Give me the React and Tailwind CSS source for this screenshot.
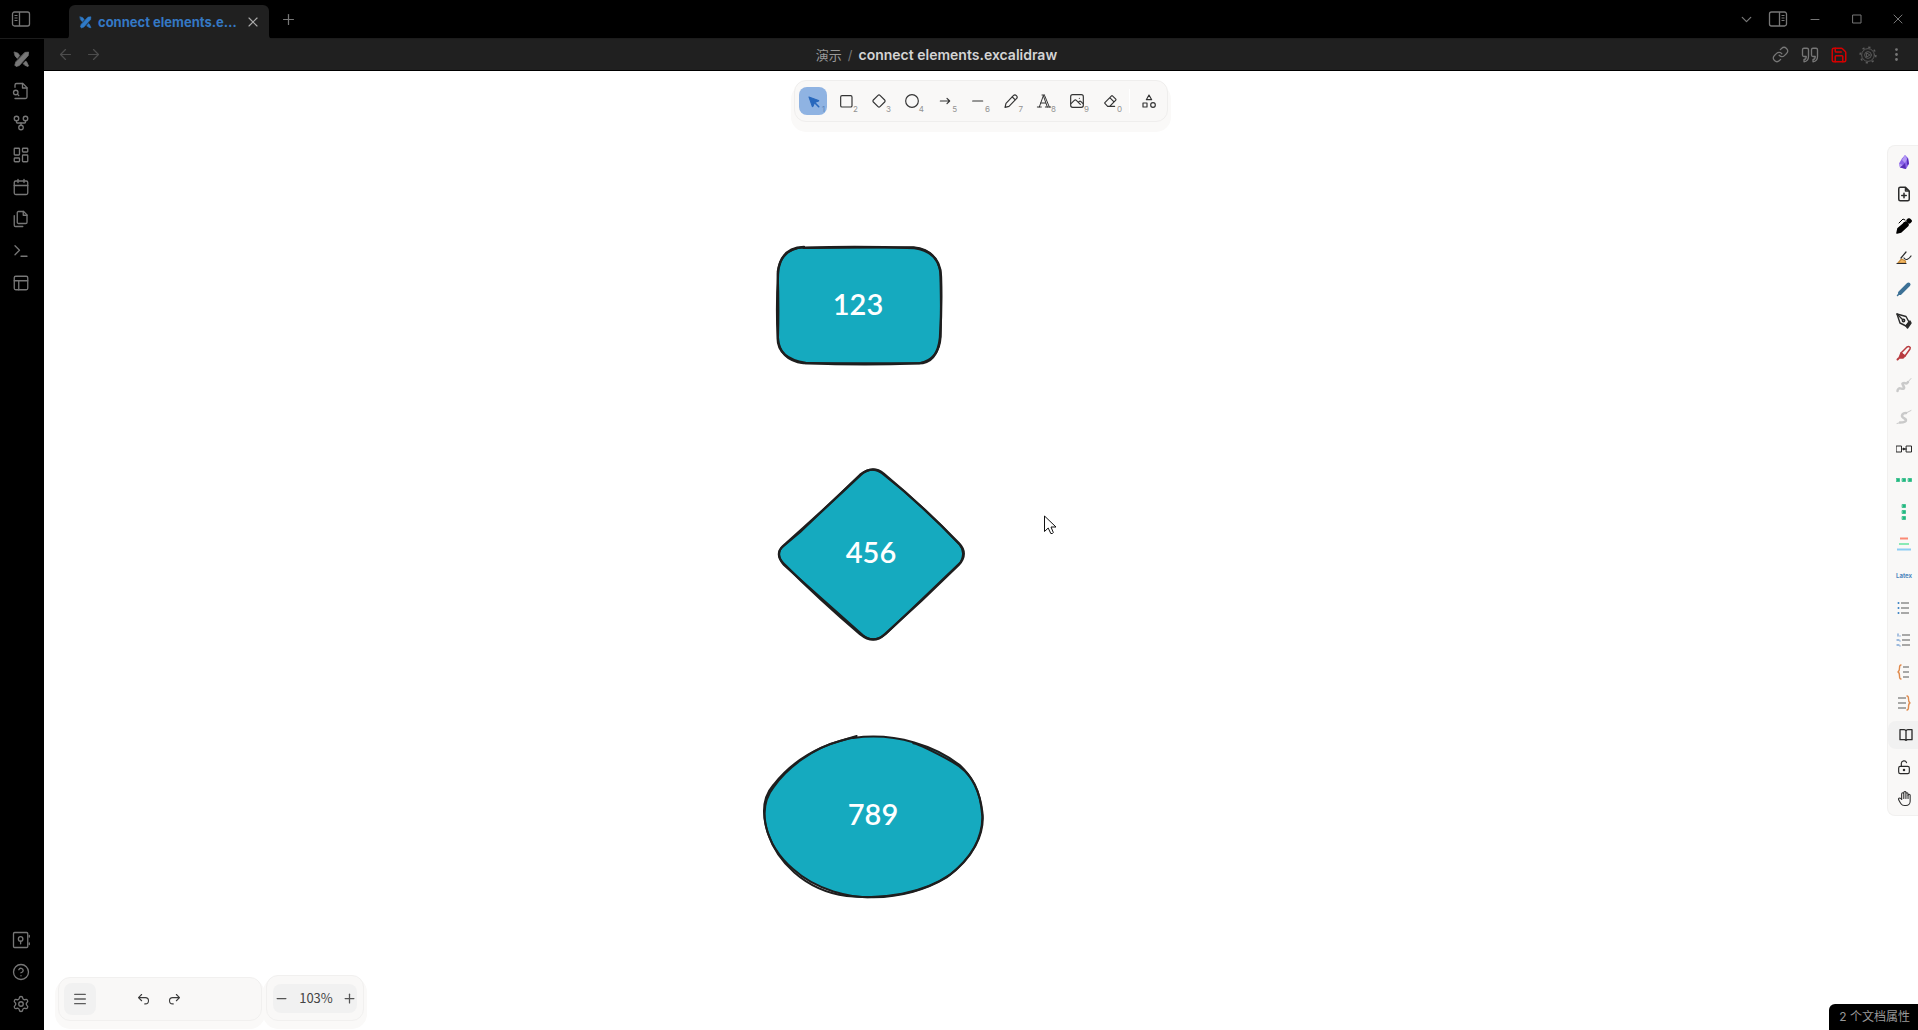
import React from "react";
import {
  ArrowLeft, ArrowRight, Calendar, ChevronDown, CircleHelp, EllipsisVertical, Files, GitFork,
  LayoutDashboard, Link, Menu, Minus, PanelsTopLeft, Plus, Save, Settings, Terminal, X,
} from "lucide-react";

function Svg({ size = 18, box = "0 0 24 24", width = 1.75, children, className = "" }) {
  return (
    <svg width={size} height={size} viewBox={box} fill="none" stroke="currentColor" strokeWidth={width}
      strokeLinecap="round" strokeLinejoin="round" className={className} aria-hidden="true">
      {children}
    </svg>
  );
}

const ExcalidrawLogo = ({ size }) => (
  <Svg size={size} width={1}>
    <g fill="currentColor">
      <path d="M17 2l5-.5-.5 5L9 20.500l-4.500 1.500-2-2L4 15.500z" />
      <path d="M2 1.500l5 1.500 2.500 3.500-3.500 4L3 7z" />
      <path d="M14.500 17.500l3.500-3.500 1.500 2 2.500 5-1 1-3.500-1.500z" />
    </g>
  </Svg>
);

const SidebarToggle = ({ flip }) => (
  <svg width="20" height="18" viewBox="0 0 20 18" fill="none" stroke="currentColor" aria-hidden="true" className={flip ? "-scale-x-100" : ""}>
    <rect x="1.500" y="2" width="17" height="14" rx="2" strokeWidth="1.300" />
    <path d="M8.500 2v14" strokeWidth="1.300" />
    <path d="M3.500 5.500h3M3.500 8h3M3.500 10.500h3" />
  </svg>
);

const FileSearch = () => (
  <Svg>
    <path d="M4 22h14a2 2 0 0 0 2-2V7.500L14.500 2H6a2 2 0 0 0-2 2v3" />
    <path d="M14 2v6h6" />
    <circle cx="5" cy="14" r="3" />
    <path d="m9 18-1.500-1.500" />
  </Svg>
);
const Vault = () => (
  <Svg>
    <rect x="2" y="2" width="19" height="20" rx="1.500" />
    <circle cx="11.500" cy="10.500" r="3" />
    <path d="M11.500 13.500V17M23 6v2M23 16v2" />
  </Svg>
);
const Quotes = () => (
  <Svg size={18}>
    <path d="M16 3h4a2 2 0 0 1 2 2v9c0 4-2 6.500-6 7v-3c2 0 3-1.500 3-4h-3a2 2 0 0 1-2-2V5a2 2 0 0 1 2-2z" />
    <path d="M4 3h4a2 2 0 0 1 2 2v9c0 4-2 6.500-6 7v-3c2 0 3-1.500 3-4H4a2 2 0 0 1-2-2V5a2 2 0 0 1 2-2z" />
  </Svg>
);
const GearPlay = () => (
  <Svg size={18} width={1.25} className="text-[#5c5c5c]">
    <circle cx="12" cy="12" r="8.500" />
    <circle cx="12" cy="12" r="10.500" strokeDasharray="3 5.250" strokeWidth="2" strokeLinecap="butt" />
    <circle cx="12" cy="12" r="4.500" />
    <path d="M10.500 9.500l4 2.500-4 2.500z" />
  </Svg>
);

const ribbonTop = [
  ["Excalidraw", <ExcalidrawLogo size={17} />],
  ["Quick switcher", <FileSearch />],
  ["Graph view", <GitFork size={18} strokeWidth={1.75} />],
  ["Canvas", <LayoutDashboard size={18} strokeWidth={1.75} />],
  ["Daily note", <Calendar size={18} strokeWidth={1.75} />],
  ["Templates", <Svg><path d="M15.500 2H8.600a1.600 1.600 0 0 0-1.600 1.600v12.800A1.600 1.600 0 0 0 8.600 18h9.800a1.600 1.600 0 0 0 1.600-1.600V6.500z" /><path d="M3 7.600v12.800A1.600 1.600 0 0 0 4.600 22h9.800M15 2v5h5" /></Svg>],
  ["Command palette", <Terminal size={18} strokeWidth={1.75} />],
  ["Workspaces", <PanelsTopLeft size={18} strokeWidth={1.75} />],
];
const ribbonBottom = [
  ["Vault", <Vault />],
  ["Help", <CircleHelp size={18} strokeWidth={1.75} />],
  ["Settings", <Settings size={18} strokeWidth={1.75} />],
];

function Ribbon({ items }) {
  return (
    <div className="flex flex-col">
      {items.map(([label, icon]) => (
        <button key={label} aria-label={label} className="grid h-8 w-full place-items-center">{icon}</button>
      ))}
    </div>
  );
}

const tools = [
  ["Selection", <Svg size={18} box="0 0 22 22" width={1.25}><path fill="currentColor" d="M6 6l4.153 11.793a.365.365 0 0 0 .331.207.366.366 0 0 0 .332-.207L13 13l4.787-1.994a.355.355 0 0 0 .213-.323.355.355 0 0 0-.213-.323L6 6Z" /><path d="M13.500 13.500L18 18" strokeWidth="2" /></Svg>],
  ["Rectangle", <Svg size={16}><rect x="4" y="4" width="17" height="17" rx="2" /></Svg>],
  ["Diamond", <Svg size={16}><path d="M10.500 3.500l-7 7a2.100 2.100 0 0 0 0 3l7 7a2.100 2.100 0 0 0 3 0l7-7a2.100 2.100 0 0 0 0-3l-7-7a2.100 2.100 0 0 0-3 0z" /></Svg>],
  ["Ellipse", <Svg size={16}><circle cx="12" cy="12" r="9.500" /></Svg>],
  ["Arrow", <Svg size={16}><path d="M5 12h14M15 16l4-4M15 8l4 4" /></Svg>],
  ["Line", <Svg size={16}><path d="M4 12h15" /></Svg>],
  ["Draw", <Svg size={16}><path d="M4.500 15.500L15.500 4a3.200 3.200 0 0 1 4.700 4.500L9 20l-6 1.500z" /><path d="M14 6l4 4" /></Svg>],
  ["Text", <Svg size={16} width={1.5}><path d="M2 21h6M14 21h8M5 21l6-17h2l7 17M11 4l6 17M7 15h7.500M9 3h4" /></Svg>],
  ["Image", <Svg size={16}><rect x="2.500" y="2.500" width="19" height="19" rx="3" /><path d="M15.500 8h.01M3 16l5-5c1-.9 2-.9 3 0l6 6M14 14l1-1c1-.9 2-.9 3 0l3 3" /></Svg>],
  ["Eraser", <Svg size={16}><path d="M19 20H8.500l-4.200-4.300a1 1 0 0 1 0-1.400l10-10a1 1 0 0 1 1.400 0l5 5a1 1 0 0 1 0 1.400L11.500 20M18 13.300L11.700 7" /></Svg>],
];

function Toolbar() {
  return (
    <div className="flex justify-center pt-[9px]">
      <div className="rounded-xl border border-[#efeeed] bg-[#f9f8f7] px-1 py-1.5 shadow-[0_7px_0_3px_#faf9f8]">
        <div role="toolbar" aria-label="Shapes" className="flex items-center gap-[5px] text-[#343434]">
          {tools.map(([label, icon], i) => (
            <button key={label} aria-label={label} className={"relative grid size-7 place-items-center rounded-lg " + (i === 0 ? "bg-[#8fb3e2] text-[#2868bd]" : "")}>
              {icon}
              <span className={"absolute bottom-0.5 right-0.5 text-[8px] leading-2 " + (i === 0 ? "text-[#5c86bd]" : "text-[#929292]")}>{(i + 1) % 10}</span>
            </button>
          ))}
          <span className="h-6 w-px bg-white" />
          <button aria-label="More tools" className="grid size-7 place-items-center">
            <Svg size={16}><path d="M12 3l-4 7h8zM3 15h6v6H3z" /><circle cx="18" cy="18" r="3.500" /></Svg>
          </button>
        </div>
      </div>
    </div>
  );
}

const lines = (x, w) => <path d={`M${x} 3h${w}M${x} 8h${w}M${x} 13h${w}`} stroke="#8d8d8d" strokeWidth="1.500" strokeLinecap="butt" />;

const pinned = [
  ["Obsidian tools", <Svg size={16} box="0 0 16 16" width={0}><path fill="#8a63e8" d="M9 1l3 3 1 6-3 5-6-1.500-1-4 3-5z" /><path fill="#b59af5" d="M9 1L6 6l3 3 2-4zM3 9.500L7 11l-3 2.500z" /><path fill="#5a2fb8" d="M9 9l1 6-6-1.500 3-2.500zM11 5l1-1 1 6-2 1z" /></Svg>],
  ["Add file", <Svg size={18} width={2}><path d="M14 3v5h5M5 5a2 2 0 0 1 2-2h7l5 5v11a2 2 0 0 1-2 2H7a2 2 0 0 1-2-2zM12 11v6M9 14h6" /></Svg>],
  ["Marker pen", <Svg size={16} box="0 0 16 16" width={1}><g stroke="#000" fill="#000"><path d="M1 15l1-4.500 7-6 3 3L5 14z" strokeWidth="1.500" /><circle cx="13" cy="3" r="2.300" /><path d="M10 4l2.500 2.500-2 2-3-3z" /><path d="M3 5l4-4 2 1" fill="none" /></g></Svg>],
  ["Highlighter", <Svg size={16} box="0 0 16 16" width={1.2}><path d="M2 13l3.500-4 4 2v2z" fill="#f3b762" stroke="#c88c3c" /><path d="M5 8l5-6M8 8c2 3 5 1 7-2M1 13.500h9" /></Svg>],
  ["Ballpoint", <Svg size={16} box="0 0 16 16" width={4}><path d="M4 12l8.500-8.500" stroke="#3d7196" strokeWidth="4" /><path d="M1.500 14.500l2-2" stroke="#3d7196" strokeWidth="1.500" /></Svg>],
  ["Fountain pen", <Svg size={16} box="0 0 16 16" width={1.4}><path d="M1 1l3 9 6 3 3-4-3-5.500z" /><path d="M1 1l6 6" /><circle cx="7.500" cy="7.500" r="1.200" /><path d="M10 13l4-5 1 2-3.500 5z" fill="currentColor" /></Svg>],
  ["Red marker", <Svg size={16} box="0 0 16 16" width={1.5}><g stroke="#b93b40"><path d="M5 8l6-6c2-1 4 0 3 2l-5 7z" /><path d="M5 8l4 3-2 2H3z" fill="#b93b40" /><path d="M1.500 14.500l1-1" strokeWidth="2" /></g></Svg>],
  ["Thick brush", <Svg size={16} box="0 0 16 16" width={2}><g stroke="#cacaca"><path d="M1.500 14c0-2 2-3 3-2.500s4.500.5 3.500-1.500-3-4 0-4 2 2 4-1" strokeWidth="2.500" /><path d="M11 6l4-4.500" strokeWidth="1" /></g></Svg>],
  ["Thin brush", <Svg size={16} box="0 0 16 16" width={2}><g stroke="#cacaca"><path d="M4 13.500c4 0 6-1 6-2.500S5.500 9 6 6.500 8 4 10 4" strokeWidth="2.500" /><path d="M10 4l5-2.500M1 14.500l4-1" strokeWidth="1" /></g></Svg>],
  ["Connect elements", <Svg size={16} box="0 0 16 16" width={1}><path d="M.5 5h5v6h-5zM10.500 5h5v6h-5zM5.500 8h5" strokeLinejoin="miter" /><path d="M7 6.500l3 1.500-3 1.500z" fill="currentColor" stroke="none" /></Svg>],
  ["Distribute horizontally", <Svg size={16} box="0 0 16 16" width={1}><path fill="#1fba80" stroke="#45c193" strokeLinejoin="miter" d="M.5 6.500h3v3h-3zM6.500 6.500h3v3h-3zM12.500 6.500h3v3h-3z" /></Svg>],
  ["Distribute vertically", <Svg size={16} box="0 0 16 16" width={1}><path fill="#1fba80" stroke="#45c193" strokeLinejoin="miter" d="M6.500.5h3v3h-3zM6.500 6.500h3v3h-3zM6.500 12.500h3v3h-3z" /></Svg>],
  ["Stack", <Svg size={16} box="0 0 16 16" width={2}><g strokeLinecap="butt"><path d="M4 2.500h8" stroke="#fb8a75" /><path d="M3 8h10" stroke="#63e6a0" strokeWidth="1.500" /><path d="M1 13.500h14" stroke="#8bcdf3" /></g></Svg>],
  ["Latex", <span className="text-[6px] font-bold leading-4 text-[#4e86bd]">Latex</span>],
  ["Bulleted list", <Svg size={16} box="0 0 16 16">{lines(5, 8)}<path d="M2.500 3h.01M2.500 8h.01M2.500 13h.01" stroke="#3b82c4" strokeWidth="2" /></Svg>],
  ["Numbered list", <Svg size={16} box="0 0 16 16">{lines(6, 8)}<path d="M2 2v2M4 4h.01M1 8h2M4 9h.01M1 13h2M4 14h.01" stroke="#7da4d4" strokeWidth="1.300" /></Svg>],
  ["Left brace", <Svg size={16} box="0 0 16 16">{lines(7, 6)}<path d="M5 1C2 1 5 6.500 2 8c3 1 0 7 3 7" stroke="#e08a4c" strokeWidth="1.400" /></Svg>],
  ["Right brace", <Svg size={16} box="0 0 16 16">{lines(2, 8)}<path d="M11 1c3 0 0 5.500 3 7-3 1 0 7-3 7" stroke="#e08a4c" strokeWidth="1.400" /></Svg>],
  ["Library", <Svg size={16} width={2}><path d="M3 4h6a3 3 0 0 1 3 2 3 3 0 0 1 3-2h6v15h-7l-2 1-2-1H3zM12 6v14" /></Svg>],
  ["Lock", <Svg size={16} width={1.75}><rect x="4" y="11" width="16" height="11" rx="2.500" /><circle cx="12" cy="16.500" r="1" fill="currentColor" /><path d="M8 11V6.500a4 4 0 0 1 7.800-1" /></Svg>],
  ["Hand", <Svg size={17} width={1.5}><path d="M8 13V5.500a1.500 1.500 0 0 1 3 0V12M11 5.500v-2a1.500 1.500 0 1 1 3 0V12M14 5.500a1.500 1.500 0 0 1 3 0V12" /><path d="M17 7.500a1.500 1.500 0 0 1 3 0V16a6 6 0 0 1-6 6h-2a6 6 0 0 1-5-2.700C6.700 19 5.600 17 3.700 13.600a1.500 1.500 0 0 1 .5-2 1.900 1.900 0 0 1 2.300.3L8 13" /></Svg>],
];

function PinnedScripts() {
  return (
    <div role="toolbar" aria-label="Pinned scripts" className="absolute right-0 top-[74px] flex h-[671px] w-[31px] flex-col justify-between rounded-l-lg border border-r-0 border-[#f1f0ef] bg-[#f9f8f7] py-0.5 text-[#2b2b2b]">
      {pinned.map(([label, icon]) => (
        <button key={label} aria-label={label} className={"grid h-7 w-full place-items-center rounded-l-lg " + (label === "Library" ? "bg-[#f1f1f1] pl-1.5" : "pl-0.5")}>{icon}</button>
      ))}
    </div>
  );
}

function Shape({ place, box, label, children }) {
  return (
    <div className={"absolute grid place-items-center " + place}>
      <svg viewBox={box} className="col-start-1 row-start-1 size-full" stroke="#1e1e1e" fill="none" strokeLinejoin="round" strokeLinecap="round" aria-hidden="true">{children}</svg>
      <span className="col-start-1 row-start-1 font-[Lato] text-[29px] font-semibold leading-8 text-white">{label}</span>
    </div>
  );
}

function Drawing() {
  return (
    <>
      <Shape place="left-[714px] top-[158px] h-[150px] w-[200px]" box="-6 -3 600 450" label="123">
        <path fill="#15aabf" strokeWidth="7" d="M132 53Q300 48 463 54Q542 66 543 140Q546 230 540 322Q532 402 472 400Q300 406 137 399Q52 384 53 323Q49 230 54 132Q58 54 132 51Z" />
        <path strokeWidth="6" d="M130 54Q300 53 460 52Q530 58 541 127Q544 240 542 320Q538 388 478 400Q300 400 130 400Q58 390 54 323Q57 230 53 125Q62 58 130 52Z" />
      </Shape>
      <Shape place="left-[717px] top-[381px] h-[200px] w-[220px]" box="3 6 660 600" label="456">
        <path fill="#15aabf" strokeWidth="7" d="M303 74C322 56 348 52 371 71Q490 170 597 280C616 300 616 322 596 345Q490 450 374 553C350 576 325 572 300 552Q180 450 70 340C52 322 53 303 69 288Q180 190 303 74Z" />
        <path strokeWidth="6" d="M300 74C325 55 346 54 365 69Q490 166 599 284C614 302 612 318 602 337L378 551C350 574 328 572 308 555L72 345C52 322 54 302 68 290L120 247Z" />
      </Shape>
      <Shape place="left-[704px] top-[648px] h-[190px] w-[250px]" box="-6 -3 750 570" label="789">
        <path fill="#15aabf" strokeWidth="6" d="M318 51C210 72 125 125 70 195C18 255 40 370 130 448C200 512 300 533 370 532C460 530 530 508 590 472C670 415 706 340 697 275C690 215 664 168 630 136C560 80 440 36 310 54" />
        <path strokeWidth="6" d="M320 48L270 63C190 83 110 145 72 200C40 240 36 285 54 340C80 420 160 510 290 528C400 540 520 520 600 464C665 412 697 350 697 290C692 215 670 160 608 126C560 100 505 73 490 70" />
      </Shape>
      <svg width="14" height="21" viewBox="0 0 14 21" className="absolute left-[1000px] top-[444px]" fill="#fff" stroke="#111" aria-hidden="true">
        <path d="M.5 1v15.500l3.700-3.500 2.600 5.500q2 .5 2.500-1L7 12h5z" />
      </svg>
    </>
  );
}

function Footer() {
  return (
    <div className="absolute bottom-[9px] left-3.5 flex items-end gap-1">
      <div className="flex h-11 w-[204px] items-center rounded-xl border border-[#f1f0ef] bg-[#f9f8f7] pl-[5px] text-[#3b3b3b] shadow-[0_5px_0_3px_#faf9f8]">
        <button aria-label="Menu" className="grid size-8 place-items-center rounded-lg bg-[#f1f1f1] text-[#5c5c5c]"><Menu size={16} strokeWidth={2} /></button>
        <button aria-label="Undo" className="ml-8 grid size-[30px] place-items-center"><Svg size={15}><path d="M9 14l-5-5 5-5M4 9h11a5 5 0 0 1 0 10h-1" /></Svg></button>
        <button aria-label="Redo" className="grid size-8 place-items-center"><Svg size={15}><path d="M15 14l5-5-5-5M20 9H9a5 5 0 0 0 0 10h1" /></Svg></button>
      </div>
      <div className="flex h-[46px] w-[98px] items-center justify-center rounded-xl border border-[#f1f0ef] bg-[#f9f8f7] shadow-[0_5px_0_3px_#faf9f8]">
        <div className="flex h-[29px] w-[84px] items-center justify-between rounded-lg bg-[#f1f1f1] text-[#555]">
          <button aria-label="Zoom out" className="grid w-4 place-items-center"><Minus size={15} /></button>
          <button aria-label="Reset zoom" className="pl-0.5 font-['Noto_Sans_CJK_SC',sans-serif] text-[13px] leading-5 text-[#444]">103%</button>
          <button aria-label="Zoom in" className="grid w-4 place-items-center"><Plus size={15} /></button>
        </div>
      </div>
    </div>
  );
}

function TitleBar() {
  return (
    <header className="flex h-[39px] shrink-0 items-stretch border-b border-[#1c1c1c] text-[#777]">
      <button aria-label="Toggle left sidebar" className="grid w-[42px] place-items-center"><SidebarToggle /></button>
      <div className="relative -mb-px ml-[27px] mt-[5px] flex w-[200px] items-center rounded-t-md bg-[#202020] pl-2.5 pr-2">
        <svg width="4" height="4" className="absolute -left-1 bottom-0" aria-hidden="true"><path d="M4 0v4H0q4 0 4-4z" fill="#202020" /></svg>
        <svg width="4" height="4" className="absolute -right-1 bottom-0" aria-hidden="true"><path d="M0 0v4h4q-4 0-4-4z" fill="#202020" /></svg>
        <span className="w-[19px] text-[#2f7bc9]"><ExcalidrawLogo size={13} /></span>
        <span className="whitespace-nowrap text-[13px] font-bold leading-5 text-[#3478c4]">connect elements.e…</span>
        <button aria-label="Close tab" className="ml-auto grid place-items-center text-[#aaa]"><X size={16} strokeWidth={1.75} /></button>
      </div>
      <button aria-label="New tab" className="ml-2.5 grid w-[18px] place-items-center"><Plus size={17} strokeWidth={1.75} /></button>
      <div className="ml-auto flex items-stretch">
        <button aria-label="Tab list" className="grid w-8 place-items-center"><ChevronDown size={17} strokeWidth={1.75} /></button>
        <button aria-label="Toggle right sidebar" className="grid w-8 place-items-center"><SidebarToggle flip /></button>
        <button aria-label="Minimize" className="grid w-[42px] place-items-center"><Svg size={10} box="0 0 10 10" width={1}><path d="M1 5.500h8" /></Svg></button>
        <button aria-label="Maximize" className="grid w-[42px] place-items-center"><Svg size={10} box="0 0 10 10" width={1}><rect x="1" y="1" width="8" height="8" /></Svg></button>
        <button aria-label="Close window" className="grid w-10 place-items-center"><Svg size={10} box="0 0 10 10" width={1}><path d="M1 1l8 8M9 1l-8 8" /></Svg></button>
      </div>
    </header>
  );
}

const headerActions = [
  ["Copy link", <Link size={17} strokeWidth={1.75} />],
  ["Quote", <Quotes />],
  ["Save", <Save size={18} strokeWidth={2} color="#d40000" />],
  ["Install script", <GearPlay />],
  ["More options", <EllipsisVertical size={17} strokeWidth={2} />],
];

export default function App() {
  return (
    <div className="flex h-screen flex-col overflow-hidden bg-black font-['Inter','Noto_Sans_CJK_SC',sans-serif]">
      <TitleBar />
      <div className="flex min-h-0 flex-1">
        <nav aria-label="Ribbon" className="flex w-[44px] shrink-0 flex-col justify-between pb-2.5 pr-0.5 pt-1 text-[#777]">
          <Ribbon items={ribbonTop} />
          <Ribbon items={ribbonBottom} />
        </nav>
        <div className="flex min-w-0 flex-1 flex-col">
          <div className="flex h-8 shrink-0 items-center border-b border-black bg-[#202020] pl-[7px] pr-[7px] text-[#777]">
            <button aria-label="Back" className="grid w-7 place-items-center text-[#4c4c4c]"><ArrowLeft size={17} strokeWidth={1.75} /></button>
            <button aria-label="Forward" className="grid w-7 place-items-center text-[#4c4c4c]"><ArrowRight size={17} strokeWidth={1.75} /></button>
            <div className="flex flex-1 items-center justify-center gap-1.5 leading-5">
              <a href="#folder" className="text-[13px] text-[#999]">演示</a>
              <span className="text-[13px] text-[#777]">/</span>
              <h1 className="text-sm font-semibold text-[#d4d4d4]">connect elements.excalidraw</h1>
            </div>
            {headerActions.map(([label, icon]) => (
              <button key={label} aria-label={label} className="grid w-[29px] place-items-center">{icon}</button>
            ))}
          </div>
          <main className="relative min-h-0 flex-1 bg-white">
            <Toolbar />
            <Drawing />
            <PinnedScripts />
            <Footer />
            <div className="absolute bottom-0 right-0 rounded-tl-md bg-black px-2 pl-2.5 text-xs leading-[26px] text-[#999]">2 个文档属性</div>
          </main>
        </div>
      </div>
    </div>
  );
}
